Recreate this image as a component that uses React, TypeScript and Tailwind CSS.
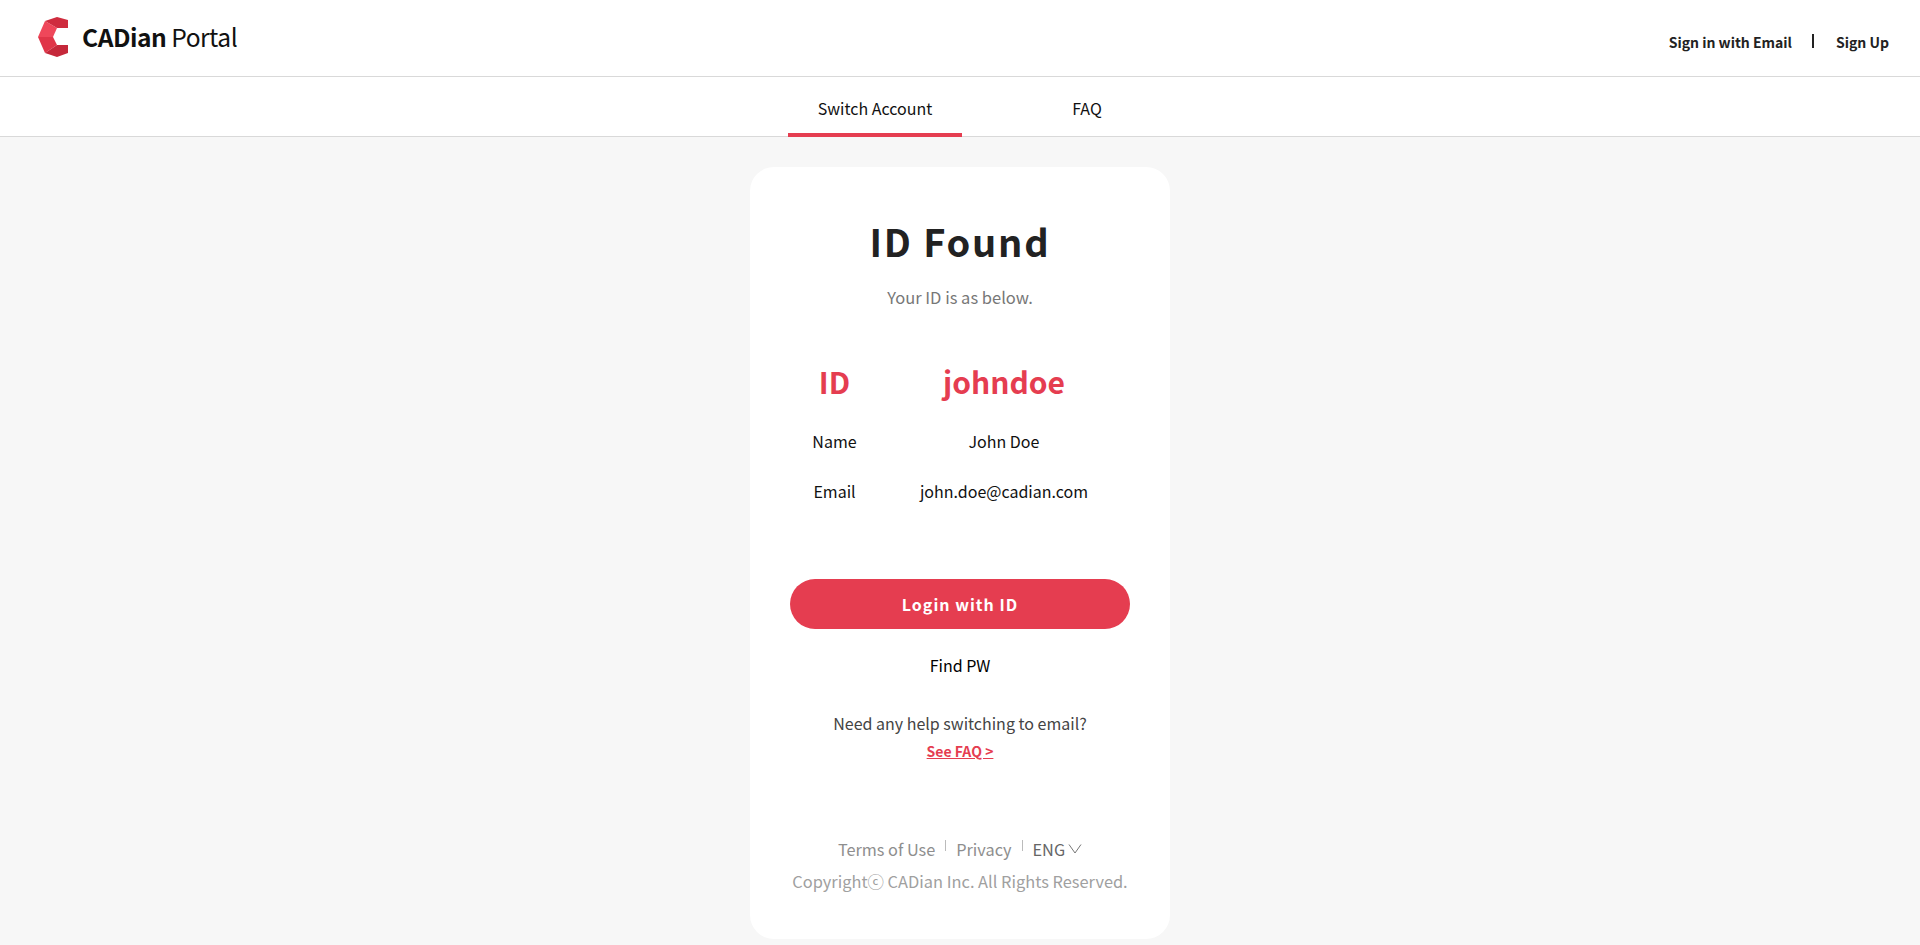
function Logo() {
  return (
    <svg width="31" height="40" viewBox="0 0 31 40" className="shrink-0">
      <path d="M0 20 L7 4 L19 11 L15 20 Z" fill="#ef475a" />
      <path d="M0 20 L15 20 L19 28 L7 36 Z" fill="#e03548" />
      <path d="M7 4 L19 0 L30 3 L30 11 L19 11 Z" fill="#cf2c3e" />
      <path d="M7 36 L19 28 L30 28 L30 36 L19 40 Z" fill="#c5283a" />
    </svg>
  );
}

export default function App() {
  return (
    <div className="min-h-[945px] bg-[#f7f7f7] font-['Noto_Sans_CJK_KR','Noto_Sans',sans-serif] text-[#111]">
      {/* Header */}
      <header className="flex h-[77px] items-center justify-between border-b border-[#d9d9d9] bg-white pl-[38px] pr-[31px]">
        <div className="mb-[3px] flex items-center gap-[13px]">
          <Logo />
          <div className="text-[24.6px] tracking-[-0.5px]">
            <span className="font-bold">CADian</span> <span>Portal</span>
          </div>
        </div>
        <div className="mt-2 flex items-center text-sm font-bold text-[#222]">
          <a>Sign in with Email</a>
          <span className="ml-[20px] mr-[22px] mb-[2px] h-[14px] w-[2px] bg-[#222]" />
          <a>Sign Up</a>
        </div>
      </header>

      {/* Tabs */}
      <nav className="flex h-[60px] justify-center border-b border-[#d9d9d9] bg-white">
        <div className="ml-[42px] flex">
          <a className="flex h-[60px] w-[174px] items-center justify-center border-b-4 border-[#e53d50] pt-[6px] text-base">Switch Account</a>
          <a className="ml-[38px] flex h-[60px] w-[174px] items-center justify-center border-b-4 border-transparent pt-[6px] text-base">FAQ</a>
        </div>
      </nav>

      {/* Card */}
      <main className="flex justify-center pt-[30px]">
        <section className="flex h-[772px] w-[420px] flex-col items-center rounded-[24px] bg-white px-10 pt-[49px]">
          <h1 className="text-[38px] leading-[50px] font-bold tracking-[1.8px] text-[#222]">ID Found</h1>
          <p className="mt-[19px] text-[16.5px] leading-6 text-[#777]">Your ID is as below.</p>

          <dl className="mt-[50px] grid w-[339px] grid-cols-[88px_1fr] items-center text-center">
            <dt className="text-[30px] font-bold text-[#e53d50]">ID</dt>
            <dd className="text-[30px] font-bold text-[#e53d50]">johndoe</dd>
            <dt className="mt-[25px] text-base">Name</dt>
            <dd className="mt-[25px] text-base">John Doe</dd>
            <dt className="mt-[26px] text-base">Email</dt>
            <dd className="mt-[26px] text-base">john.doe@cadian.com</dd>
          </dl>

          <button className="mt-[76px] h-[50px] w-[340px] rounded-full bg-[#e53d50] text-base font-bold tracking-[1px] text-white">Login with ID</button>
          <a className="mt-[24px] text-base text-black">Find PW</a>
          <p className="mt-[34px] text-base text-[#444]">Need any help switching to email?</p>
          <a className="mt-[6px] text-sm font-bold text-[#e53d50] underline">See FAQ &gt;</a>

          <div className="mt-[76px] flex items-center text-[16.3px] leading-6 text-[#8e8e8e]">
            <a>Terms of Use</a>
            <span className="mx-[10px] mb-2 h-[11px] w-px bg-[#bbb]" />
            <a>Privacy</a>
            <span className="mx-[10px] mb-2 h-[11px] w-px bg-[#bbb]" />
            <a className="flex items-center text-[#666]">
              ENG
              <svg width="14" height="10" viewBox="0 0 14 10" fill="none" stroke="#777" strokeWidth="1" className="ml-[3px]">
                <path d="M1 0.5 L7 9 L13 0.5" />
              </svg>
            </a>
          </div>
          <p className="mt-2 text-[16.4px] leading-6 text-[#a0a0a0]">Copyrightⓒ CADian Inc. All Rights Reserved.</p>
        </section>
      </main>
    </div>
  );
}
